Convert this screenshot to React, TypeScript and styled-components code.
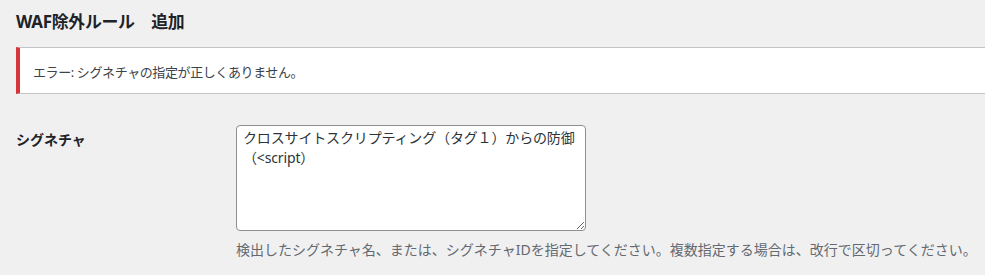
import React from "react"
import styled, { createGlobalStyle } from "styled-components"

const GlobalStyle = createGlobalStyle`
  html, body {
    margin: 0;
    padding: 0;
    background: #f0f0f1;
    overflow: hidden;
  }
  body {
    font-family: "Noto Sans", "Noto Sans CJK JP", sans-serif;
    color: #1d2327;
  }
`

const Wrap = styled.div`
  padding: 0 0 0 16px;
  min-height: 275px;
`

const Title = styled.h2`
  margin: 0;
  padding-top: 11px;
  font-size: 16.9px;
  line-height: 22px;
  font-weight: 700;
  letter-spacing: -0.3px;
  color: #1d2327;
`

const Notice = styled.div<{ $type?: "error" | "success" }>`
  margin-top: 14px;
  height: 45px;
  display: flex;
  align-items: center;
  padding: 0 12px 0 13px;
  background: #fff;
  border: 1px solid #c3c4c7;
  border-right: none;
  border-left: 4px solid ${props => (props.$type === "success" ? "#00a32a" : "#d63638")};
`

const NoticeText = styled.p`
  margin: 0;
  padding-top: 2px;
  font-size: 13px;
  line-height: 20px;
  letter-spacing: -0.4px;
  color: #3c434a;
`

const FormTable = styled.div`
  margin-top: 16px;
  display: grid;
  grid-template-columns: 210px 1fr;
`

const Label = styled.div`
  padding: 21px 10px 20px 0;
  font-size: 14px;
  line-height: 18px;
  font-weight: 700;
  color: #1d2327;
`

const Field = styled.div`
  padding: 15px 10px;
`

const TextArea = styled.textarea`
  display: block;
  box-sizing: border-box;
  width: 350px;
  height: 106px;
  margin: 0;
  padding: 2px 6px;
  font-family: "Noto Sans", "Noto Sans CJK JP", sans-serif;
  font-size: 14px;
  line-height: 20px;
  letter-spacing: -0.15px;
  color: #2c3338;
  background: #fff;
  border: 1px solid #8c8f94;
  border-radius: 4px;
  outline: none;
  resize: both;
`

const Description = styled.p`
  margin: 9px 0 0;
  font-size: 14px;
  line-height: 20px;
  letter-spacing: 0;
  color: #646970;
  white-space: nowrap;
`

export default function App() {
  return (
    <>
      <GlobalStyle />
      <Wrap>
        <Title>WAF除外ルール　追加</Title>
        <Notice $type="error">
          <NoticeText>エラー: シグネチャの指定が正しくありません。</NoticeText>
        </Notice>
        <FormTable>
          <Label>シグネチャ</Label>
          <Field>
            <TextArea
              name="signature"
              defaultValue="クロスサイトスクリプティング（タグ１）からの防御（<script）"
            />
            <Description>
              検出したシグネチャ名、または、シグネチャIDを指定してください。複数指定する場合は、改行で区切ってください。
            </Description>
          </Field>
        </FormTable>
      </Wrap>
    </>
  )
}
